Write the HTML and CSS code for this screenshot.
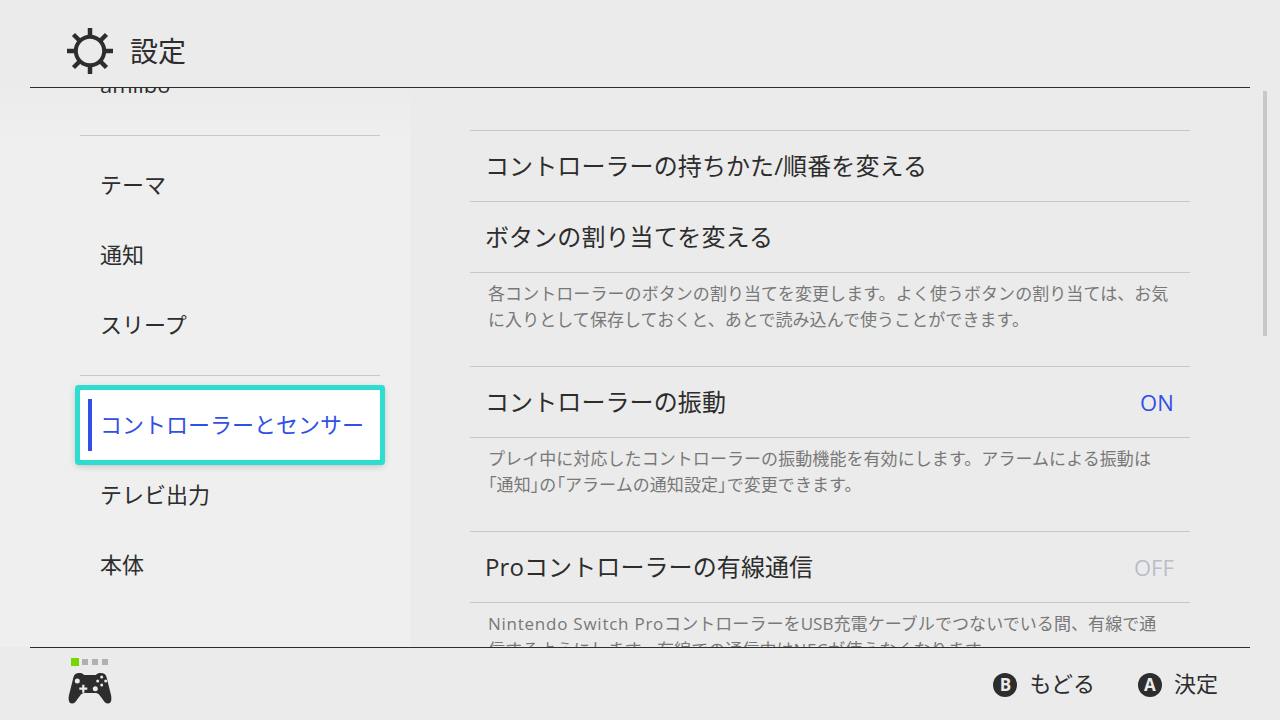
FILE: index.html
```html
<!DOCTYPE html>
<html lang="ja">
<head>
    <meta charset="UTF-8">
    <meta name="viewport" content="width=device-width, initial-scale=1.0">
    <title>設定</title>
    <link rel="stylesheet" href="styles.css">
</head>
<body>
    <div class="screen">
        <header class="header">
            <svg class="gear" width="48" height="48" viewBox="0 0 48 48">
                <circle cx="24" cy="24" r="14.2" fill="none" stroke="#2d2d2d" stroke-width="4"/>
                <g stroke="#2d2d2d" stroke-width="4.5">
                    <line x1="24" y1="1" x2="24" y2="10"/>
                    <line x1="24" y1="38" x2="24" y2="47"/>
                    <line x1="1" y1="24" x2="10" y2="24"/>
                    <line x1="38" y1="24" x2="47" y2="24"/>
                    <line x1="7.5" y1="7.5" x2="14" y2="14"/>
                    <line x1="34" y1="34" x2="40.5" y2="40.5"/>
                    <line x1="40.5" y1="7.5" x2="34" y2="14"/>
                    <line x1="14" y1="34" x2="7.5" y2="40.5"/>
                </g>
            </svg>
            <h1>設定</h1>
        </header>

        <div class="content">
            <nav class="sidebar">
                <div class="nav-item">amiibo</div>
                <div class="nav-line"></div>
                <div class="nav-item">テーマ</div>
                <div class="nav-item">通知</div>
                <div class="nav-item">スリープ</div>
                <div class="nav-line"></div>
                <div class="nav-item selected"><span class="bar"></span><span class="label">コントローラーとセンサー</span></div>
                <div class="nav-item">テレビ出力</div>
                <div class="nav-item">本体</div>
            </nav>

            <main class="main">
                <div class="row"><span class="label">コントローラーの持ちかた/順番を変える</span></div>
                <div class="row"><span class="label">ボタンの割り当てを変える</span></div>
                <p class="desc">各コントローラーのボタンの割り当てを変更します。よく使うボタンの割り当ては、お気<br>に入りとして保存しておくと、あとで読み込んで使うことができます。</p>
                <div class="row"><span class="label">コントローラーの振動</span><span class="value on">ON</span></div>
                <p class="desc">プレイ中に対応したコントローラーの振動機能を有効にします。アラームによる振動は<br><span class="kana">「</span>通知<span class="kana">」</span>の<span class="kana">「</span>アラームの通知設定<span class="kana">」</span>で変更できます。</p>
                <div class="row"><span class="label">Proコントローラーの有線通信</span><span class="value off">OFF</span></div>
                <p class="desc"><span class="latin">Nintendo Switch Pro</span>コントローラーをUSB充電ケーブルでつないでいる間、有線で通<br>信するようにします。有線での通信中は<span class="latin">NFC</span>が使えなくなります。</p>
            </main>
            <div class="scrollbar"></div>
        </div>

        <footer class="footer">
            <div class="pad">
                <div class="dots"><span class="dot lit"></span><span class="dot"></span><span class="dot"></span><span class="dot"></span></div>
                <svg class="controller" width="44" height="32" viewBox="0 0 44 32">
                    <path d="M11 1 C8 1 6.500 2 5.500 5 L1 23 C0 28 1 31.500 4 31.500 C6.500 31.500 8 29.500 9.500 27 L13 22.500 C14 21.500 15 21 17 21 L27 21 C29 21 30 21.500 31 22.500 L34.500 27 C36 29.500 37.500 31.500 40 31.500 C43 31.500 44 28 43 23 L38.500 5 C37.500 2 36 1 33 1 C30.500 1 29 1.500 28 3 L16 3 C15 1.500 13.500 1 11 1 Z" fill="#2d2d2d"/>
                    <g fill="#ebebeb">
                        <circle cx="9.300" cy="9" r="2.500"/>
                        <circle cx="27.300" cy="16.700" r="2.500"/>
                        <path d="M14.200 12.700 h2.200 v2.900 h2.900 v2.200 h-2.900 v2.900 h-2.200 v-2.900 h-2.900 v-2.200 h2.900 Z"/>
                        <circle cx="33.700" cy="5" r="1.500"/>
                        <circle cx="33.700" cy="13" r="1.500"/>
                        <circle cx="29.700" cy="9" r="1.500"/>
                        <circle cx="37.700" cy="9" r="1.500"/>
                    </g>
                </svg>
            </div>
            <div class="hints">
                <div class="hint"><span class="btn">B</span><span class="label">もどる</span></div>
                <div class="hint"><span class="btn">A</span><span class="label">決定</span></div>
            </div>
        </footer>
    </div>
</body>
</html>
```

FILE: styles.css
```css
* {
    box-sizing: border-box;
}
html, body {
    margin: 0;
    height: 100%;
    overflow: hidden;
}
body {
    font-family: "Open Sans", "Noto Sans CJK JP", sans-serif;
    color: #2d2d2d;
    background-color: #ebebeb;
}
.screen {
    width: 1280px;
    height: 720px;
    display: flex;
    flex-direction: column;
}
.header {
    height: 88px;
    margin: 0 30px;
    padding: 14px 0 0 36px;
    border-bottom: 1px solid #2d2d2d;
    display: flex;
    align-items: center;
    gap: 16px;
    flex-shrink: 0;
}
h1 {
    margin: 0;
    font-size: 28px;
    font-weight: 400;
    line-height: 1;
}
.label {
    display: block;
    margin-top: -4px;
}
.content {
    position: relative;
    height: 559px;
    display: flex;
    overflow: hidden;
}
.sidebar {
    width: 410px;
    flex-shrink: 0;
    padding: 0 30px 0 80px;
    margin-top: -38px;
    height: 597px;
    background: linear-gradient(180deg, #ebebeb 6%, #efefef 14%);
}
.nav-item {
    height: 70px;
    padding-left: 20px;
    font-size: 22px;
    line-height: 68px;
}
.nav-line {
    height: 1px;
    margin: 15px 0 14px;
    background-color: #c8c8c8;
}
.selected {
    padding-left: 8px;
    display: flex;
    align-items: center;
    gap: 8px;
    color: #3050e8;
    background-color: #fff;
    border-radius: 1px;
    box-shadow: 0 0 0 5px #2fdcd0, 0 2px 7px 4px rgba(0,0,0,0.2);
    white-space: nowrap;
}
.selected .label {
    margin-top: -2px;
}
.bar {
    width: 4px;
    height: 52px;
    background-color: #3050e8;
}
.main {
    width: 720px;
    margin-left: 60px;
    padding-top: 42px;
}
.row {
    height: 71px;
    padding: 0 16px 0 15px;
    border-top: 1px solid #c8c8c8;
    display: flex;
    align-items: center;
    justify-content: space-between;
    font-size: 24px;
    letter-spacing: 0.1px;
}
.value {
    font-size: 22px;
}
.on {
    color: #3050e8;
}
.off {
    color: #b9bec8;
}
.desc {
    height: 94px;
    margin: 0;
    padding: 8px 0 0 18px;
    border-top: 1px solid #c8c8c8;
    font-size: 17px;
    line-height: 26px;
    letter-spacing: 0.07px;
    color: #787878;
    white-space: nowrap;
}
.kana {
    font-feature-settings: "palt";
}
.latin {
    letter-spacing: 0.75px;
}
.scrollbar {
    position: absolute;
    left: 1263px;
    top: 3px;
    width: 4px;
    height: 245px;
    background-color: #c8c8c8;
}
.footer {
    height: 73px;
    margin: 0 30px;
    padding: 0 32px 0 38px;
    border-top: 1px solid #2d2d2d;
    display: flex;
    align-items: flex-start;
    justify-content: space-between;
}
.pad {
    padding-top: 10px;
}
.dots {
    display: flex;
    align-items: center;
    gap: 4px;
    height: 8px;
    margin: 0 0 6px 3px;
}
.dot {
    width: 6px;
    height: 6px;
    background-color: #b0b0b0;
}
.dot.lit {
    width: 8px;
    height: 8px;
    margin-right: -1px;
    background-color: #76d600;
}
.controller {
    display: block;
}
.hints {
    display: flex;
    gap: 43px;
    padding-top: 25px;
}
.hint {
    display: flex;
    align-items: center;
    gap: 12px;
    font-size: 22px;
    line-height: 26px;
}
.btn {
    width: 24px;
    height: 24px;
    border-radius: 50%;
    background-color: #2d2d2d;
    color: #ebebeb;
    font-size: 17px;
    font-weight: 700;
    line-height: 24px;
    text-align: center;
}
```
